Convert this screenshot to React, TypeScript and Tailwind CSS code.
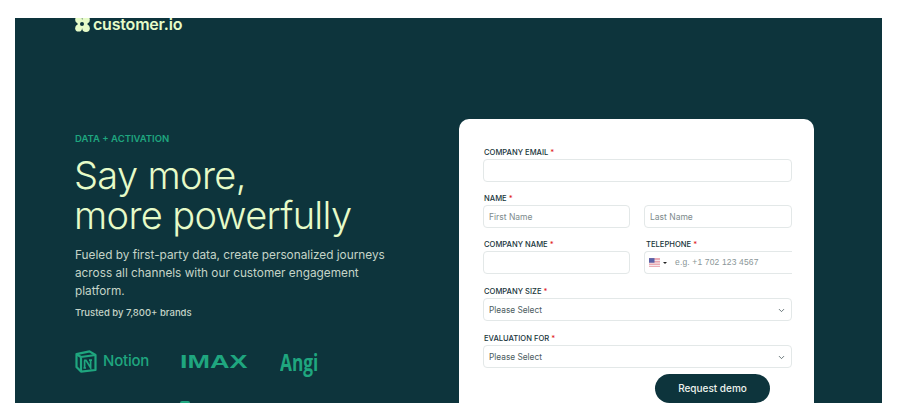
import { ChevronDown } from 'lucide-react'

const sans = { fontFamily: 'Inter, "Liberation Sans", sans-serif' }

function Label({ text, className = '' }: { text: string; className?: string }) {
  return (
    <div className={`h-[14px] text-[7.6px] leading-[16px] font-medium text-[#17343a] whitespace-nowrap ${className}`}>
      {text} <span className="text-[#e11d1d]">*</span>
    </div>
  )
}

function Input({ placeholder, className = '' }: { placeholder?: string; className?: string }) {
  return (
    <div className={`h-[23px] rounded-[4px] border border-[#e3e8e8] bg-white pl-[5px] text-[8.5px] leading-[23px] text-[#7d8b8d] ${className}`}>
      {placeholder}
    </div>
  )
}

function Select({ label, className = '' }: { label: string; className?: string }) {
  return (
    <div className={className}>
      <Label text={label} className="-mt-[1px] pl-[1px]" />
      <div className="flex h-[23px] items-center justify-between rounded-[4px] border border-[#e3e8e8] bg-white pt-[1px] pl-[5px] pr-[5px] text-[8.3px] text-[#4c5c60]">
        Please Select
        <ChevronDown size={9} strokeWidth={2.2} className="text-[#4c5c60]" />
      </div>
    </div>
  )
}

export default function App() {
  return (
    <div className="h-[419px] w-[900px] overflow-hidden bg-white pt-[18px] pl-[15px]" style={sans}>
      <div className="flex h-[385px] w-[867px] overflow-hidden bg-[#0d343c]">
        <div className="w-[444px] pl-[60px]">
          <div className="-mt-[3px] flex h-[18px] items-center gap-[3px] text-[#e6fbc8]">
            <svg width="15" height="16" viewBox="0 0 15 16" className="shrink-0">
              <g fill="currentColor">
                <circle cx="3.6" cy="3.8" r="3.4" />
                <circle cx="3.6" cy="12.2" r="3.4" />
                <circle cx="11" cy="3.8" r="3.8" />
                <circle cx="11" cy="12.2" r="3.8" />
                <rect x="2.5" y="4" width="10" height="8" />
              </g>
              <circle cx="7" cy="8" r="2" fill="#0d343c" />
              <path d="M0 6.6 L1.8 8 L0 9.4 Z M15 6.8 L13.4 8 L15 9.2 Z" fill="#0d343c" />
            </svg>
            <span className="text-[16px] font-semibold tracking-[-0.2px]">customer.io</span>
          </div>

          <div className="mt-[100px] text-[9.5px] leading-[12px] font-semibold text-[#1fa67f]">DATA + ACTIVATION</div>
          <h1 className="mt-[10px] -ml-[1px] text-[38px] leading-[40px] font-[350] tracking-[-0.65px] text-[#e6fbc8]">
            Say more,
            <br />
            more powerfully
          </h1>
          <p className="mt-[11px] w-[320px] text-[11.8px] leading-[18px] text-[#c5d4c8]">
            Fueled by first-party data, create personalized journeys across all channels with our customer engagement platform.
          </p>
          <div className="mt-[6px] text-[9.5px] leading-[14px] font-medium text-[#c5d4c8]">Trusted by 7,800+ brands</div>

          <div className="mt-[30px] flex h-[23px] items-center text-[#1fa67f]">
            <svg width="22" height="23" viewBox="0 0 22 23" fill="none" stroke="currentColor" strokeWidth="2.2" strokeLinejoin="round">
              <path d="M1.5 4.2 L14.5 1.4 L20.5 5 V20 L6 21.6 L1.5 17 Z" />
              <path d="M1.5 4.2 L6 7 L20.5 5 M6 7 V21.6" />
              <path d="M9 10.4 H11 L15.6 17.8 V10.2 M9.6 10.4 V18 M8.4 18 H11 M14 10.2 H17" strokeWidth="1.7" strokeLinejoin="miter" />
            </svg>
            <span className="ml-[6px] w-[46px] text-[15px] font-medium tracking-[-0.2px]">Notion</span>
            <span className="ml-[31px] inline-block w-[68px] origin-left scale-x-150 text-[18px] leading-none font-bold" style={{ fontFamily: '"Liberation Sans", sans-serif' }}>IMAX</span>
            <span className="ml-[32px] origin-left scale-x-[0.72] text-[24px] leading-none font-bold" style={{ fontFamily: '"Open Sans", sans-serif' }}>Angi</span>
          </div>
          <div className="mt-[28px] ml-[105px] h-[2px] w-[10px] rounded-t-[2px] bg-[#1fa67f]" />
        </div>

        <div className="mt-[101px] h-[310px] w-[355px] shrink-0 rounded-t-[10px] bg-white pt-[26px] pl-[24px]">
          <div className="w-[309px]">
            <div className="mb-[9px]">
              <Label text="COMPANY EMAIL" className="pl-[1px]" />
              <Input />
            </div>
            <div className="mb-[9px]">
              <Label text="NAME" className="pl-[1px]" />
              <div className="grid grid-cols-[147px_148px] gap-[14px]">
                <Input placeholder="First Name" />
                <Input placeholder="Last Name" />
              </div>
            </div>
            <div className="mb-[11px] grid grid-cols-[147px_148px] gap-[14px]">
              <div>
                <Label text="COMPANY NAME" className="pl-[1px]" />
                <Input />
              </div>
              <div>
                <Label text="TELEPHONE" className="pl-[2px]" />
                <div className="flex h-[23px] items-center rounded-l-[4px] border border-r-0 border-[#e3e8e8] pl-[4px] text-[8.5px] text-[#8a9698]">
                  <svg width="11" height="9" viewBox="0 0 10 8">
                    <rect width="10" height="8" fill="#e9a3ad" />
                    <rect y="1.6" width="10" height="1" fill="#f6e9ec" />
                    <rect y="4" width="10" height="1" fill="#f6e9ec" />
                    <rect y="6.2" width="10" height="1" fill="#f6e9ec" />
                    <rect width="5" height="4.2" fill="#5b62a8" />
                  </svg>
                  <span className="ml-[3px] h-0 w-0 border-x-[2px] border-t-[2px] border-x-transparent border-t-[#222]" />
                  <span className="ml-[8px] tracking-[0.15px]" style={{ fontFamily: '"Liberation Sans", sans-serif' }}>e.g. +1 702 123 4567</span>
                </div>
              </div>
            </div>
            <Select label="COMPANY SIZE" className="mb-[11px]" />
            <Select label="EVALUATION FOR" className="mb-[6px]" />
            <button className="ml-[172px] block h-[29px] w-[115px] rounded-full bg-[#0d343c] text-[10px] font-medium text-[#eef3ee]">
              Request demo
            </button>
          </div>
        </div>
      </div>
    </div>
  )
}
